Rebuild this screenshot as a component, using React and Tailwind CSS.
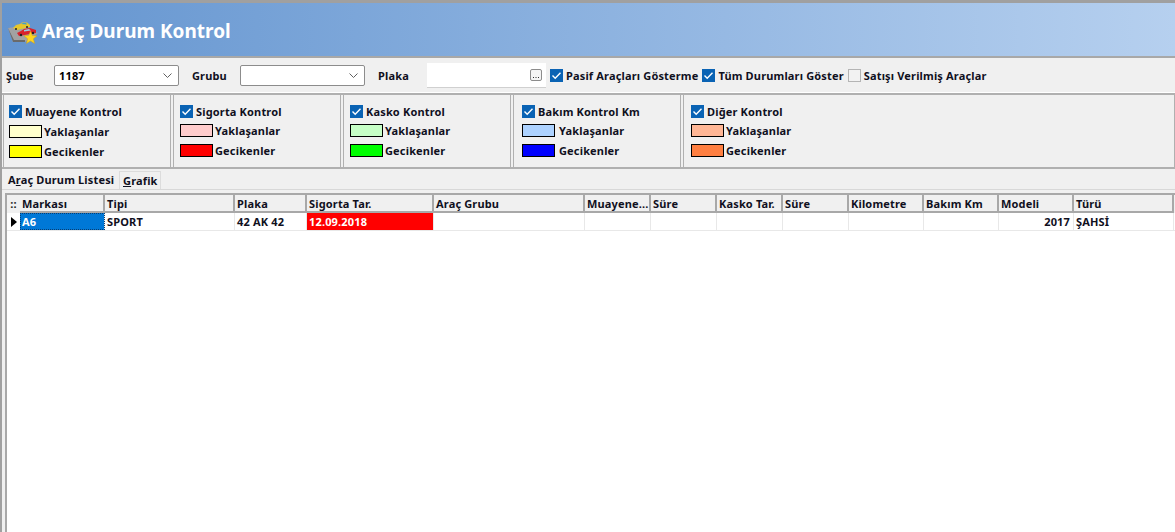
import clsx from "clsx";

const groups = [
  { title: "Muayene Kontrol", near: "bg-[#ffffcc]", late: "bg-[#ffff00]", w: "w-[168px]", pad: "pl-[5px]", gap: "gap-[2px]", rows: "mt-[3px]" },
  { title: "Sigorta Kontrol", near: "bg-[#ffcccc]", late: "bg-[#ff0000]", w: "w-[168px]", pad: "pl-[6px]", gap: "gap-[2px]", rows: "mt-[2px]" },
  { title: "Kasko Kontrol", near: "bg-[#c6ffc6]", late: "bg-[#00ff00]", w: "w-[168px]", pad: "pl-[6px]", gap: "gap-[2px]", rows: "mt-[2px]" },
  { title: "Bakım Kontrol Km", near: "bg-[#add2ff]", late: "bg-[#0000ff]", w: "w-[168px]", pad: "pl-[8px]", gap: "gap-[4px]", rows: "mt-[2px]" },
  { title: "Diğer Kontrol", near: "bg-[#ffb695]", late: "bg-[#ff7f41]", w: "flex-1", pad: "pl-[7px]", gap: "gap-[2px]", rows: "mt-[2px]" },
];

const columns = [
  { label: "Markası", w: "w-[85px] pl-[2px]" },
  { label: "Tipi", w: "w-[130px] pl-[2px]" },
  { label: "Plaka", w: "w-[72px] pl-[2px]" },
  { label: "Sigorta Tar.", w: "w-[127px] pl-[2px]" },
  { label: "Araç Grubu", w: "w-[151px] pl-[2px]" },
  { label: "Muayene...", w: "w-[66px] pl-[2px]" },
  { label: "Süre", w: "w-[66px] pl-[2px]" },
  { label: "Kasko Tar.", w: "w-[66px] pl-[2px]" },
  { label: "Süre", w: "w-[66px] pl-[2px]" },
  { label: "Kilometre", w: "w-[75px] pl-[2px]" },
  { label: "Bakım Km", w: "w-[75px] pl-[2px]" },
  { label: "Modeli", w: "w-[75px] pl-[2px]" },
  { label: "Türü", w: "w-[100px] pl-[2px]" },
];

const row = [
  { text: "A6", className: "bg-[#0078d7] text-white outline-1 -outline-offset-1 outline-dotted outline-[#0a3d70]" },
  { text: "SPORT" },
  { text: "42 AK 42" },
  { text: "12.09.2018", className: "bg-[#ff0000] text-white" },
  { text: "" },
  { text: "" },
  { text: "" },
  { text: "" },
  { text: "" },
  { text: "" },
  { text: "" },
  { text: "2017", className: "justify-end pr-[3px]" },
  { text: "ŞAHSİ" },
];

function CheckBox({ checked = true }) {
  if (!checked) {
    return <span className="block size-[13px] shrink-0 border border-[#b4b4b4] bg-[#f2f2f2]" />;
  }
  return (
    <svg className="size-[13px] shrink-0" viewBox="0 0 13 13" aria-hidden="true">
      <rect width="13" height="13" fill="#0a63b4" />
      <path d="M2.5 6.5 5.2 9.2 10.5 3.8" fill="none" stroke="#fff" strokeWidth="1.4" />
    </svg>
  );
}

function CarIcon() {
  return (
    <svg className="h-[28px] w-[32px] shrink-0" viewBox="0 0 32 28" aria-hidden="true">
      {/* platform */}
      <path d="M1 11 15 9 31 16 18 25 6 25Z" fill="#a2a2a2" />
      <path d="M1 11 6 25 18 25 18 23 7 23Z" fill="#6a6a6a" />
      {/* taxi */}
      <path d="M6 11 9 8 13 7 15 5.500 20 5.500 23 8 23 10 10 13Z" fill="#e6c62c" />
      <path d="M14 7 16 6 19 6 20 7.500Z" fill="#3f9ecb" />
      <circle cx="9" cy="12" r="1" fill="#222" />
      <circle cx="20" cy="10" r="1" fill="#222" />
      {/* red car */}
      <path d="M10 16 14 14 17 12 23 11 26 12 29 13 29 16 12 19Z" fill="#d9212b" />
      <path d="M17 13 22 12 24 13.500 17 14.500Z" fill="#9ccbe4" />
      <circle cx="14" cy="18" r="1.200" fill="#222" />
      <circle cx="26" cy="16" r="1.200" fill="#222" />
      {/* star */}
      <path d="M23.500 14 25.300 18.500 30 18.800 26.400 21.800 27.600 26.500 23.500 24 19.400 26.500 20.600 21.800 17 18.800 21.700 18.500Z" fill="#ffd51e" stroke="#d29f12" strokeWidth="0.5" />
    </svg>
  );
}

function Field({ value, w }) {
  return (
    <div className={clsx("flex h-[21px] items-center justify-between rounded-[2px] border border-[#8c8c8c] bg-white pl-[4px] pr-[6px] text-black", w)}>
      <span>{value}</span>
      <svg className="h-[5px] w-[9px]" viewBox="0 0 9 5" aria-hidden="true">
        <path d="M.5.5 4.5 4.5 8.5.5" fill="none" stroke="#606060" />
      </svg>
    </div>
  );
}

function Legend({ swatch, label, gap }) {
  return (
    <div className={clsx("flex h-[20px] items-center", gap)}>
      <span className={clsx("block h-[13px] w-[33px] border border-black", swatch)} />
      <span>{label}</span>
    </div>
  );
}

export default function App() {
  return (
    <div className="flex h-[532px] w-[1175px] flex-col overflow-hidden border-t-[3px] border-l-2 border-[#a0a0a0] bg-[#f0f0f0] font-['Noto_Sans',sans-serif] text-[11px] font-bold leading-none tracking-[0.16px] text-[#10101e]">
      <header className="flex h-[53px] items-center bg-gradient-to-r from-[#6394cf] to-[#b6d0ef] pl-[5px] pt-[3px] text-[19px] tracking-normal text-white">
        <CarIcon />
        <span className="ml-[3px]">Araç Durum Kontrol</span>
      </header>
      <div className="h-[2px] bg-[#a8a8a8]" />

      <div className="flex h-[34px] items-center pl-[4px]">
        <span className="w-[48px]">Şube</span>
        <Field value="1187" w="w-[125px]" />
        <span className="ml-[13px] w-[48px]">Grubu</span>
        <Field value="" w="w-[125px]" />
        <span className="ml-[13px] w-[49px]">Plaka</span>
        <div className="flex h-[25px] w-[119px] items-center justify-end border-b border-[#d0d0d0] bg-white pr-[4px]">
          <svg className="size-[12px]" viewBox="0 0 12 12" aria-hidden="true">
            <rect x=".5" y=".5" width="11" height="11" rx="1.5" fill="#f4f4f4" stroke="#8c8c8c" />
            <path d="M3 8h1v1H3zM5.5 8h1v1h-1zM8 8h1v1H8z" fill="#303030" />
          </svg>
        </div>
        <div className="ml-[4px] flex items-center gap-[3px]">
          <CheckBox />
          <span>Pasif Araçları Gösterme</span>
        </div>
        <div className="ml-[4px] flex items-center gap-[3px]">
          <CheckBox />
          <span>Tüm Durumları Göster</span>
        </div>
        <div className="ml-[4px] flex items-center gap-[3px]">
          <CheckBox checked={false} />
          <span>Satışı Verilmiş Araçlar</span>
        </div>
      </div>

      <div className="h-px bg-white" />
      <div className="flex h-[76px] gap-[2px] border-y-2 border-[#b0b0b0] pl-[1px]">
        {groups.map((group) => (
          <section key={group.title} className={clsx("border-x border-[#b0b0b0] pt-[10px]", group.w, group.pad)}>
            <div className="flex items-center gap-[3px]">
              <CheckBox />
              <span>{group.title}</span>
            </div>
            <div className={group.rows}>
              <Legend swatch={group.near} label="Yaklaşanlar" gap={group.gap} />
              <Legend swatch={group.late} label="Gecikenler" gap={group.gap} />
            </div>
          </section>
        ))}
      </div>

      <div className="flex h-[21px] border-b border-[#d8d8d8]">
        <div className="flex w-[117px] items-center pl-[6px]">
          <span>A<u>r</u>aç Durum Listesi</span>
        </div>
        <div className="mt-[2px] flex w-[42px] items-center border-x border-t border-[#dcdcdc] pl-[3px]">
          <span><u>G</u>rafik</span>
        </div>
      </div>

      <div className="mt-[3px] ml-[3px] flex flex-1 flex-col overflow-hidden border-l-2 border-t-2 border-[#a8a8a8] bg-white">
        <div className="flex h-[18px] bg-[#f0f0f0]">
          <div className="flex w-[13px] items-center justify-center pb-[2px] text-[#202020]">::</div>
          {columns.map((col, i) => (
            <div key={i} className={clsx("flex items-center overflow-hidden whitespace-nowrap border-r-2 border-b-2 border-[#a8a8a8]", col.w)}>
              {col.label}
            </div>
          ))}
        </div>
        <div className="flex h-[18px] border-b border-[#e8e8e8] bg-white">
          <div className="flex w-[13px] items-center justify-center">
            <svg className="h-[10px] w-[6px]" viewBox="0 0 6 10" aria-hidden="true">
              <path d="M0 0 6 5 0 10Z" fill="#000" />
            </svg>
          </div>
          {columns.map((col, i) => (
            <div key={i} className={clsx("flex items-center border-r border-[#e8e8e8]", col.w, row[i].className)}>
              {row[i].text}
            </div>
          ))}
        </div>
      </div>
    </div>
  );
}
